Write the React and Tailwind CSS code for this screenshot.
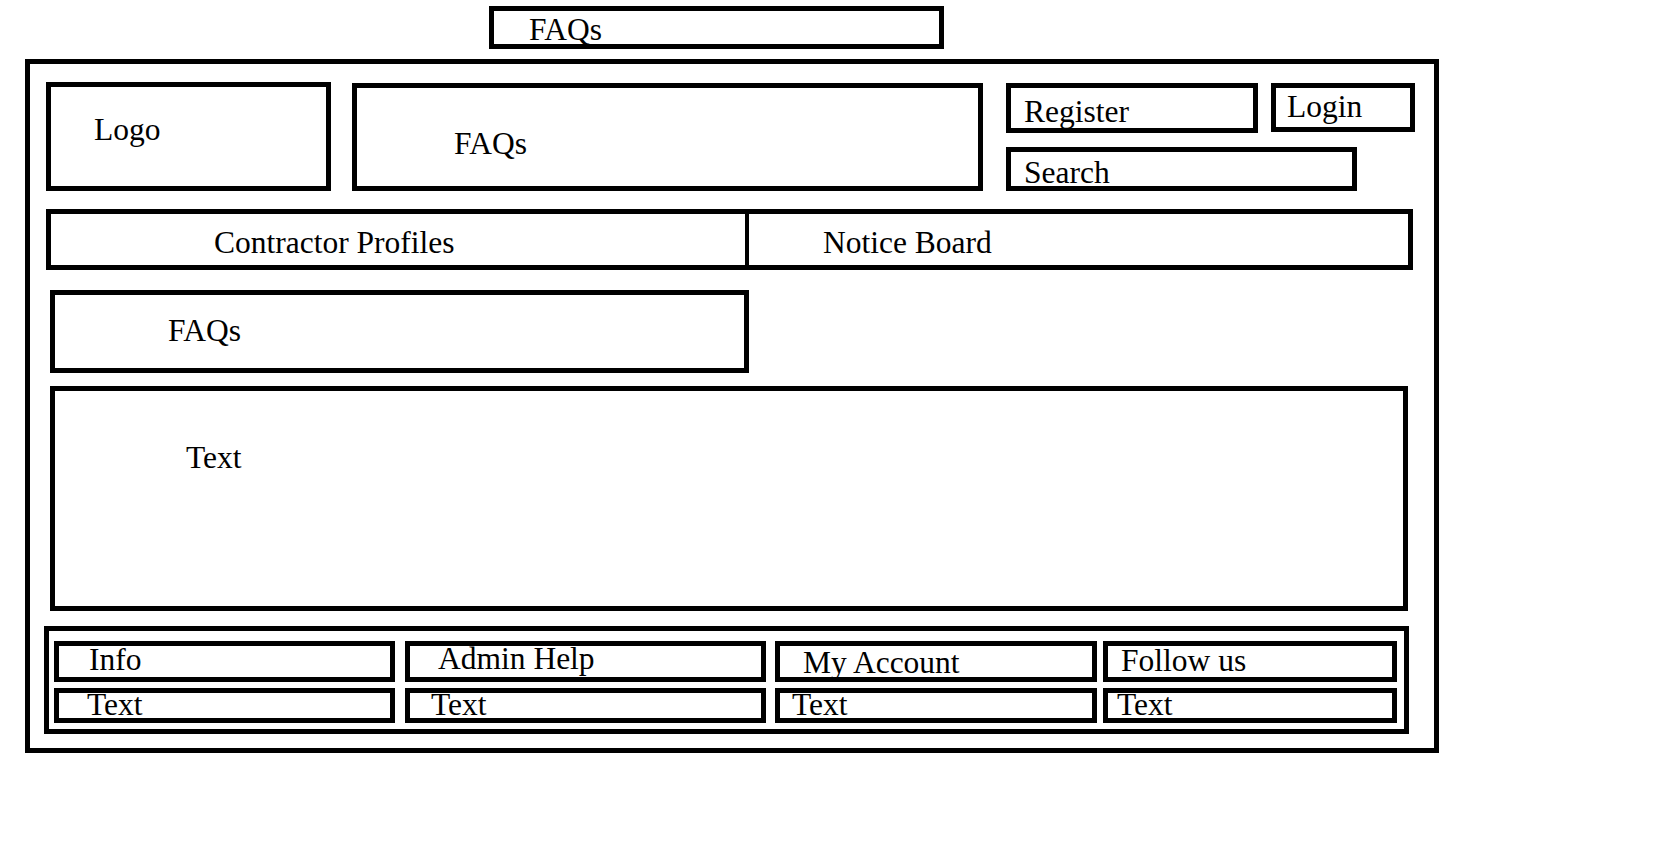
// wireframe layout: header, nav, faq section and footer
const box = 'border-[5px] border-black';

const FooterCell = ({ label, text, w, ml, p1, p2x, pt1 }) => (
    <div className="flex flex-col">
        <div className={`${box} ${w} ${ml} h-[41px] ${p1} ${pt1} leading-[25px] whitespace-nowrap`}>{label}</div>
        <div className={`${box} ${w} ${ml} h-[35px] mt-[6px] ${p2x} leading-[23px] whitespace-nowrap`}>{text}</div>
    </div>
);

export default function App() {
    return (
        <div className="min-h-screen w-full bg-white text-black text-[31.5px] font-['Liberation_Serif','Times_New_Roman',serif]">
            {/* page title */}
            <div className="pt-[6px] pl-[489px]">
                <div className={`${box} w-[455px] h-[43px] pl-[35px] pt-[3px] leading-[31px]`}>FAQs</div>
            </div>

            {/* main frame */}
            <div className={`${box} mt-[10px] ml-[25px] w-[1414px] h-[694px] pt-[18px]`}>
                {/* header */}
                <div className="flex items-start">
                    <div className={`${box} ml-[16px] w-[285px] h-[109px] pl-[43px] pt-[27px] leading-[31px]`}>Logo</div>
                    <div className={`${box} ml-[21px] mt-[1px] w-[631px] h-[108px] pl-[97px] pt-[40px] leading-[31px]`}>FAQs</div>
                    <div className="ml-[23px] mt-[1px] flex flex-col">
                        <div className="flex items-start">
                            <div className={`${box} w-[252px] h-[50px] pl-[13px] pt-[8px] leading-[31px]`}>Register</div>
                            <div className={`${box} ml-[13px] w-[144px] h-[49px] pl-[11px] pt-[3px] leading-[31px]`}>Login</div>
                        </div>
                        <div className={`${box} mt-[14px] w-[351px] h-[44px] pl-[13px] pt-[5px] leading-[31px] overflow-hidden`}>Search</div>
                    </div>
                </div>

                {/* nav */}
                <div className={`${box} mt-[18px] ml-[16px] w-[1367px] h-[61px] flex`}>
                    <div className="w-[694px] pl-[163px] pt-[13px] leading-[31px] whitespace-nowrap">Contractor Profiles</div>
                    <div className="flex-1 border-l-[4px] border-black pl-[74px] pt-[13px] leading-[31px] whitespace-nowrap">Notice Board</div>
                </div>

                {/* faq section */}
                <div className={`${box} mt-[20px] ml-[20px] w-[699px] h-[83px] pl-[113px] pt-[20px] leading-[31px]`}>FAQs</div>

                {/* text area */}
                <div className={`${box} mt-[13px] ml-[20px] w-[1358px] h-[225px] pl-[131px] pt-[51px] leading-[31px]`}>Text</div>

                {/* footer */}
                <div className={`${box} mt-[15px] ml-[14px] w-[1365px] h-[108px] pt-[10px] pl-[5px] flex items-start`}>
                    <FooterCell label="Info" text="Text" w="w-[341px]" ml="" p1="pl-[30px]" pt1="pt-[1px]" p2x="pl-[28px]" />
                    <FooterCell label="Admin Help" text="Text" w="w-[361px]" ml="ml-[10px]" p1="pl-[28px]" pt1="pt-0" p2x="pl-[21px]" />
                    <FooterCell label="My Account" text="Text" w="w-[322px]" ml="ml-[9px]" p1="pl-[23px]" pt1="pt-[4px]" p2x="pl-[12px]" />
                    <FooterCell label="Follow us" text="Text" w="w-[294px]" ml="ml-[6px]" p1="pl-[13px]" pt1="pt-[2px]" p2x="pl-[9px]" />
                </div>
            </div>
        </div>
    );
}
